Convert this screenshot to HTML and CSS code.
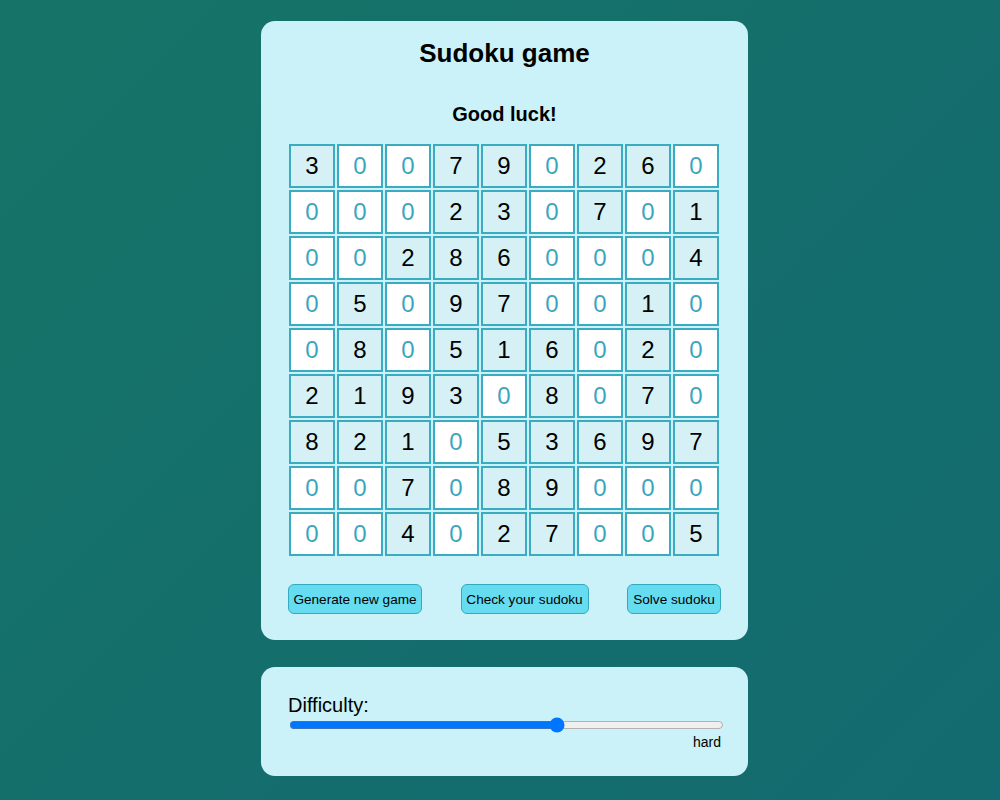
FILE: index.html
```html
<!DOCTYPE html>
<html>
<head>
<meta charset="utf-8">
<link rel="stylesheet" href="styles.css">
</head>
<body>
<div class="page">
  <div class="card game">
    <h1 class="title">Sudoku game</h1>
    <div class="status">Good luck!</div>
    <div class="board">
      <div class="cell given">3</div><div class="cell empty">0</div><div class="cell empty">0</div><div class="cell given">7</div><div class="cell given">9</div><div class="cell empty">0</div><div class="cell given">2</div><div class="cell given">6</div><div class="cell empty">0</div>
      <div class="cell empty">0</div><div class="cell empty">0</div><div class="cell empty">0</div><div class="cell given">2</div><div class="cell given">3</div><div class="cell empty">0</div><div class="cell given">7</div><div class="cell empty">0</div><div class="cell given">1</div>
      <div class="cell empty">0</div><div class="cell empty">0</div><div class="cell given">2</div><div class="cell given">8</div><div class="cell given">6</div><div class="cell empty">0</div><div class="cell empty">0</div><div class="cell empty">0</div><div class="cell given">4</div>
      <div class="cell empty">0</div><div class="cell given">5</div><div class="cell empty">0</div><div class="cell given">9</div><div class="cell given">7</div><div class="cell empty">0</div><div class="cell empty">0</div><div class="cell given">1</div><div class="cell empty">0</div>
      <div class="cell empty">0</div><div class="cell given">8</div><div class="cell empty">0</div><div class="cell given">5</div><div class="cell given">1</div><div class="cell given">6</div><div class="cell empty">0</div><div class="cell given">2</div><div class="cell empty">0</div>
      <div class="cell given">2</div><div class="cell given">1</div><div class="cell given">9</div><div class="cell given">3</div><div class="cell empty">0</div><div class="cell given">8</div><div class="cell empty">0</div><div class="cell given">7</div><div class="cell empty">0</div>
      <div class="cell given">8</div><div class="cell given">2</div><div class="cell given">1</div><div class="cell empty">0</div><div class="cell given">5</div><div class="cell given">3</div><div class="cell given">6</div><div class="cell given">9</div><div class="cell given">7</div>
      <div class="cell empty">0</div><div class="cell empty">0</div><div class="cell given">7</div><div class="cell empty">0</div><div class="cell given">8</div><div class="cell given">9</div><div class="cell empty">0</div><div class="cell empty">0</div><div class="cell empty">0</div>
      <div class="cell empty">0</div><div class="cell empty">0</div><div class="cell given">4</div><div class="cell empty">0</div><div class="cell given">2</div><div class="cell given">7</div><div class="cell empty">0</div><div class="cell empty">0</div><div class="cell given">5</div>
    </div>
    <div class="actions">
      <button class="btn btn-new">Generate new game</button>
      <button class="btn btn-check">Check your sudoku</button>
      <button class="btn btn-solve">Solve sudoku</button>
    </div>
  </div>
  <div class="card settings">
    <label class="label" for="difficulty">Difficulty:</label>
    <input class="slider" id="difficulty" type="range" min="0" max="100" value="62">
    <div class="level">hard</div>
  </div>
</div>
</body>
</html>
```
FILE: styles.css
```css
html, body {
  margin: 0;
  padding: 0;
  height: 100%;
}
body {
  background: linear-gradient(135deg, #157467 0%, #146e6c 55%, #136a70 100%);
  font-family: "Liberation Sans", Arial, sans-serif;
  color: #000;
}
.page {
  display: flex;
  flex-direction: column;
  align-items: center;
  padding-top: 21px;
  padding-left: 9px;
  gap: 27px;
}
.card {
  width: 487px;
  box-sizing: border-box;
  background: #cbf2f8;
  border-radius: 14px;
  padding: 0 27px;
}
.game {
  padding-top: 17px;
  padding-bottom: 26px;
}
.title {
  margin: 0;
  font-size: 26px;
  line-height: 30px;
  font-weight: bold;
  text-align: center;
}
.status {
  margin-top: 34px;
  font-size: 20px;
  line-height: 24px;
  font-weight: bold;
  text-align: center;
}
.board {
  margin-top: 18px;
  margin-left: 1px;
  display: grid;
  grid-template-columns: repeat(9, 46px);
  grid-auto-rows: 44px;
  gap: 2px;
}
.cell {
  box-sizing: border-box;
  border: 2px solid #3aabc1;
  display: flex;
  align-items: center;
  justify-content: center;
  font-size: 24px;
}
.given {
  background: #d5f1f6;
  color: #000;
}
.empty {
  background: #fff;
  color: #3aa7bf;
}
.actions {
  margin-top: 28px;
  display: flex;
  justify-content: space-between;
}
.btn {
  height: 30px;
  padding: 0;
  background: #66dcf1;
  border: 1px solid #36a9c2;
  border-radius: 6px;
  font-family: "Liberation Sans", Arial, sans-serif;
  font-size: 13.6px;
  color: #000;
  white-space: nowrap;
}
.btn-new { width: 134px; }
.btn-check { width: 128px; }
.btn-solve { width: 94px; }
.settings {
  padding-top: 26px;
  padding-bottom: 26px;
  display: flex;
  flex-direction: column;
}
.label {
  font-size: 20px;
  line-height: 24px;
}
.slider {
  width: 435px;
  margin: 0 0 0 1px;
  height: 16px;
}
.level {
  text-align: right;
  font-size: 14px;
  line-height: 16px;
  margin-top: 1px;
}
```
